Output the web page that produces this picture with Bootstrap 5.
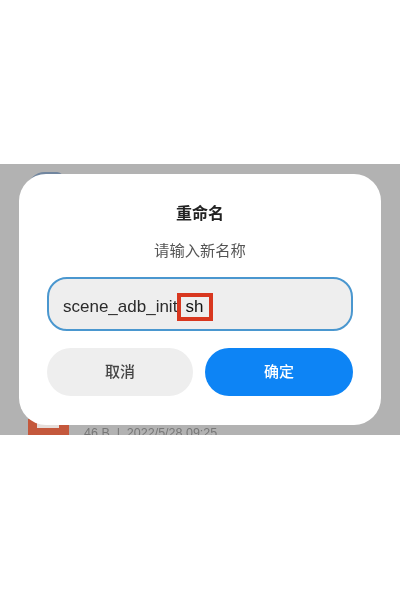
<!DOCTYPE html>
<html lang="zh">
<head>
<meta charset="utf-8">
<link href="https://cdn.jsdelivr.net/npm/bootstrap@5.3.0/dist/css/bootstrap.min.css" rel="stylesheet">
<style>
html, body { width: 400px; height: 600px; margin: 0; background: #fff; overflow: hidden; }
body { font-family: "Liberation Sans", "Noto Sans CJK SC", sans-serif; }
.scrim { margin-top: 164px; height: 271px; background: #b2b2b2; position: relative; overflow: hidden; filter: blur(.35px); }
.back-tile { position: absolute; left: 27px; top: 8px; width: 36px; height: 30px; background: #71869f; border-radius: 18px 6px 0 0; }
.back-doc { position: absolute; left: 28px; top: 255px; width: 41px; height: 16px; background: #c4583c; }
.back-doc::after { content: ""; position: absolute; left: 9px; top: 0; width: 22px; height: 9px; background: #e6dedb; }
.back-meta { position: absolute; left: 84px; top: 262px; font-size: 12.5px; line-height: 15px; color: #777; white-space: nowrap; }
.dialog-sheet { position: absolute; left: 19px; top: 10px; width: 362px; height: 251px; background: #fff; border-radius: 27px; padding: 29px 28px 0; }
.dialog-title { font-size: 16px; line-height: 22px; font-weight: 700; color: #222; text-align: center; margin: 0; }
.dialog-hint { font-size: 15.3px; line-height: 20px; color: #555; text-align: center; margin: 16px 0 0; }
.name-field { height: 54px; margin-top: 16px; background: #eeeeee; border: 2px solid #4a97cf; border-radius: 20px; padding: 0 14px; font-size: 17px; color: #2b2b2b; }
.sel-box { border: 4px solid #d8371f; padding: 0 6px 0 4px; height: 28px; margin-top: 6px; color: #111; }
.plain-name { margin-top: 6px; }
.act-btn { height: 48px; border: 0; border-radius: 24px; font-size: 15px; font-weight: 500; padding: 0; }
.act-cancel { background: #eeeeee; color: #444; flex: 0 0 146px; }
.act-ok { background: #0d84f5; color: #fff; flex: 1 1 0; }
.act-row { margin-top: 17px; gap: 12px; }
</style>
</head>
<body>
<div class="scrim">
  <div class="back-tile"></div>
  <div class="back-doc"></div>
  <div class="back-meta">46 B &nbsp;|&nbsp; 2022/5/28 09:25</div>
  <div class="dialog-sheet">
    <h5 class="dialog-title">重命名</h5>
    <p class="dialog-hint">请输入新名称</p>
    <div class="name-field d-flex align-items-center"><span class="plain-name">scene_adb_init</span><span class="sel-box d-inline-flex align-items-center">sh</span></div>
    <div class="act-row d-flex">
      <button type="button" class="btn act-btn act-cancel">取消</button>
      <button type="button" class="btn act-btn act-ok">确定</button>
    </div>
  </div>
</div>
<script src="https://cdn.jsdelivr.net/npm/bootstrap@5.3.0/dist/js/bootstrap.bundle.min.js"></script>
</body>
</html>
